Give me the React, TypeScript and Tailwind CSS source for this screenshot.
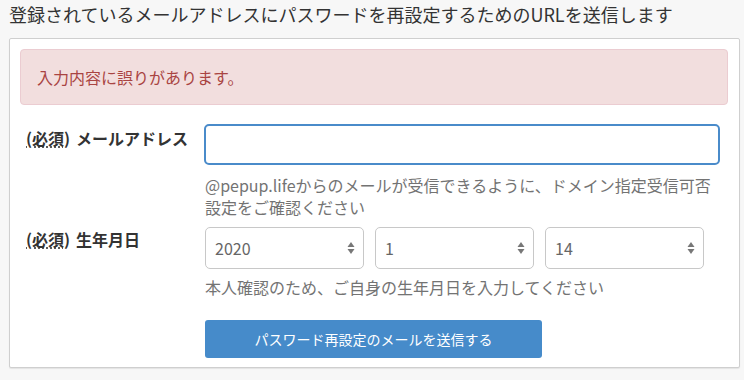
import React from "react";

const font = { fontFamily: '"Noto Sans CJK JP", "Noto Sans", sans-serif' };

function Arrows() {
  return (
    <svg width="8" height="14" viewBox="0 0 8 14" className="absolute right-[8px] top-1/2 -translate-y-1/2">
      <path d="M4 1 L7.5 6 L0.5 6 Z" fill="#777" />
      <path d="M4 13 L7.5 8 L0.5 8 Z" fill="#777" />
    </svg>
  );
}

function FakeSelect({ value }: { value: string }) {
  return (
    <div className="relative h-[42px] w-[159px] rounded-[5px] border border-[#c8c8c8] bg-white pl-[9px] flex items-center text-[16px] text-[#666]">
      {value}
      <Arrows />
    </div>
  );
}

export default function App() {
  return (
    <div className="w-[744px] h-[380px] bg-[#f7f7f7] overflow-hidden text-[#333]" style={font}>
      <div className="pl-[9px] h-[28px] flex items-center text-[18px] leading-none">
        登録されているメールアドレスにパスワードを再設定するためのURLを送信します
      </div>
      <div className="mt-[10px] ml-[9px] w-[731px] h-[330px] bg-white border border-[#cfcfcf] rounded-[2px] shadow-[0_1px_1px_rgba(0,0,0,0.08)] pt-[10px] pl-[10px] pr-[11px]">
        <div className="h-[56px] rounded-[4px] bg-[#f2dede] border border-[#ebccd1] flex items-center pl-[16px] text-[16px] text-[#a94442]">
          入力内容に誤りがあります。
        </div>
        <div className="mt-[19px] flex">
          <div className="w-[184px] shrink-0 pl-[6px] pt-[3px] text-[16px] font-bold leading-[22px] whitespace-nowrap">
            <span className="underline decoration-dotted decoration-[#333] underline-offset-2">(必須)</span>
            <span className="ml-[6px]">メールアドレス</span>
          </div>
          <div className="min-w-0 flex-1">
            <div className="h-[41px] w-[516px] rounded-[5px] border-2 border-[#4a8bca] bg-white" />
            <div className="mt-[9px] pl-[1px] text-[16px] leading-[22px] text-[#737373] whitespace-nowrap">
              @pepup.lifeからのメールが受信できるように、ドメイン指定受信可否
              <br />
              設定をご確認ください
            </div>
          </div>
        </div>
        <div className="mt-[9px] flex">
          <div className="w-[184px] shrink-0 pl-[6px] pt-[1px] text-[16px] font-bold leading-[22px] whitespace-nowrap">
            <span className="underline decoration-dotted decoration-[#333] underline-offset-2">(必須)</span>
            <span className="ml-[6px]">生年月日</span>
          </div>
          <div className="min-w-0 flex-1 pl-[1px]">
            <div className="flex gap-[11px]">
              <FakeSelect value="2020" />
              <FakeSelect value="1" />
              <FakeSelect value="14" />
            </div>
            <div className="mt-[7px] text-[16px] leading-[22px] text-[#737373]">
              本人確認のため、ご自身の生年月日を入力してください
            </div>
            <div className="mt-[22px] h-[38px] w-[337px] rounded-[3px] bg-[#468bca] text-white text-[14px] flex items-center justify-center">
              パスワード再設定のメールを送信する
            </div>
          </div>
        </div>
      </div>
    </div>
  );
}
